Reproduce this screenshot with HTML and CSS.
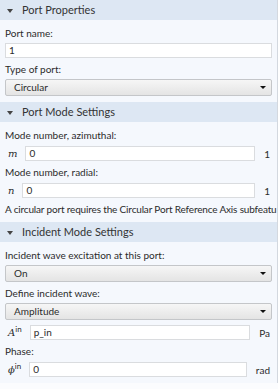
FILE: index.html
```html
<!DOCTYPE html>
<html>
<head>
  <title>Port</title>
  <link rel="stylesheet" href="styles.css">
</head>
<body>
<div class='panel'>

  <div class='sec'>
    <div class='sec-head'><span class='caret'></span>Port Properties</div>
    <div class='sec-body'>
      <div class='lbl'>Port name:</div>
      <div class='field'>1</div>
      <div class='lbl'>Type of port:</div>
      <div class='select'>Circular<span class='arrow'></span></div>
    </div>
  </div>

  <div class='sec'>
    <div class='sec-head'><span class='caret'></span>Port Mode Settings</div>
    <div class='sec-body'>
      <div class='lbl'>Mode number, azimuthal:</div>
      <div class='row'>
        <span class='sym'>m</span>
        <div class='field'>0</div>
        <span class='unit'>1</span>
      </div>
      <div class='lbl'>Mode number, radial:</div>
      <div class='row'>
        <span class='sym'>n</span>
        <div class='field'>0</div>
        <span class='unit'>1</span>
      </div>
      <div class='lbl note'>A circular port requires the Circular Port Reference Axis subfeatu</div>
    </div>
  </div>

  <div class='sec'>
    <div class='sec-head'><span class='caret'></span>Incident Mode Settings</div>
    <div class='sec-body'>
      <div class='lbl'>Incident wave excitation at this port:</div>
      <div class='select'>On<span class='arrow'></span></div>
      <div class='lbl'>Define incident wave:</div>
      <div class='select'>Amplitude<span class='arrow'></span></div>
      <div class='row row-wide'>
        <span class='sym'>A<sup>in</sup></span>
        <div class='field'>p_in</div>
        <span class='unit'>Pa</span>
      </div>
      <div class='lbl'>Phase:</div>
      <div class='row'>
        <span class='sym'>&#981;<sup>in</sup></span>
        <div class='field'>0</div>
        <span class='unit'>rad</span>
      </div>
    </div>
  </div>

</div>
</body>
</html>
```

FILE: styles.css
```css
body {
    margin: 0;
    font-family: 'Lato', 'Liberation Sans', sans-serif;
    font-size: 10px;
    color: #2b2b2b;
    background: #fbfcfe;
}

.panel {
    width: 277px;
    border-right: 1px solid #d3d8df;
    background: #f5f8fd;
    overflow: hidden;
}

.sec-head {
    height: 20px;
    line-height: 20px;
    background: #dde7f3;
    font-size: 11px;
    color: #333;
    padding-left: 22px;
    position: relative;
}

.caret {
    position: absolute;
    left: 7px;
    top: 9px;
    border-left: 3px solid transparent;
    border-right: 3px solid transparent;
    border-top: 4px solid #444;
}

.sec-body {
    padding: 6px 5px 6px 5px;
}

.lbl {
    line-height: 14px;
    margin-top: 4px;
    white-space: nowrap;
}

.sec-body > .lbl:first-child {
    margin-top: 0;
}

.note {
    letter-spacing: -0.16px;
}

.field {
    height: 13px;
    line-height: 13px;
    border: 1px solid #dadcdf;
    background: #fff;
    padding-left: 3px;
    margin-top: 3px;
}

.select {
    height: 15px;
    line-height: 15px;
    border: 1px solid #c4c6c9;
    border-radius: 2px;
    background: linear-gradient(#f6f6f6, #e4e4e4);
    padding-left: 8px;
    margin-top: 3px;
    position: relative;
}

.arrow {
    position: absolute;
    right: 5px;
    top: 6px;
    border-left: 3px solid transparent;
    border-right: 3px solid transparent;
    border-top: 3px solid #111;
}

.row {
    display: flex;
    align-items: center;
    margin-top: 4px;
}

.row .field {
    flex: 1;
    margin-top: 0;
}

.row-wide {
    margin-top: 5px;
}

.sym {
    font-style: italic;
    font-family: 'DejaVu Serif', 'Liberation Serif', serif;
    padding: 0 8px 0 3px;
    font-size: 10px;
}

.sym sup {
    font-style: normal;
    font-family: 'Lato', sans-serif;
    font-size: 8px;
    vertical-align: 4px;
    line-height: 0;
}

.unit {
    padding: 0 2px 0 9px;
}
```
